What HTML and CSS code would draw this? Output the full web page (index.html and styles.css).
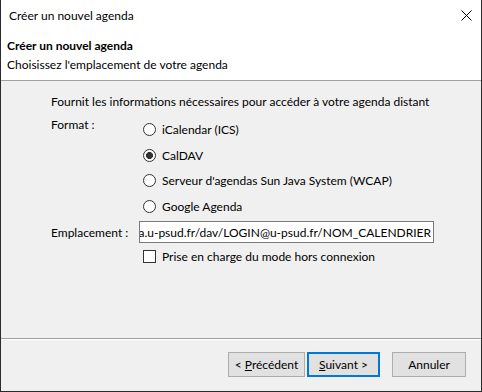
FILE: index.html
```html
<!DOCTYPE html>
<html lang="fr">
<head>
    <meta charset="UTF-8">
    <title>Créer un nouvel agenda</title>
    <link rel="stylesheet" href="styles.css">
</head>
<body>
<div class="window">
    <div class="titlebar">
        <span class="title">Créer un nouvel agenda</span>
        <svg class="close" width="11" height="11" viewBox="0 0 11 11">
            <path d="M0.5 0.5L10.5 10.5M10.5 0.5L0.5 10.5" stroke="#000" stroke-width="1" fill="none"/>
        </svg>
    </div>
    <div class="header">
        <div class="header-title">Créer un nouvel agenda</div>
        <div class="header-desc">Choisissez l'emplacement de votre agenda</div>
    </div>
    <div class="content">
        <p class="intro">Fournit les informations nécessaires pour accéder à votre agenda distant</p>
        <div class="form">
            <div class="form-label format-label">Format :</div>
            <div class="radio-group">
                <label class="radio"><span class="radio-mark"></span>iCalendar (ICS)</label>
                <label class="radio"><span class="radio-mark checked"></span>CalDAV</label>
                <label class="radio"><span class="radio-mark"></span>Serveur d'agendas Sun Java System (WCAP)</label>
                <label class="radio"><span class="radio-mark"></span>Google Agenda</label>
            </div>
            <div class="form-label">Emplacement :</div>
            <div class="field"><span>a.u-psud.fr/dav/LOGIN@u-psud.fr/NOM_CALENDRIER</span></div>
            <div></div>
            <label class="check"><span class="check-mark"></span>Prise en charge du mode hors connexion</label>
        </div>
    </div>
    <div class="footer">
        <button class="button prev">&lt; <u>P</u>récédent</button>
        <button class="button next"><u>S</u>uivant &gt;</button>
        <button class="button cancel">Annuler</button>
    </div>
</div>
</body>
</html>
```

FILE: styles.css
```css
body, html {
    margin: 0;
    padding: 0;
    font-family: Lato, 'Noto Sans', sans-serif;
    font-size: 12px;
    line-height: 19px;
    color: #000000;
    background-color: #f0f0f0;
}
.window {
    width: 482px;
    height: 392px;
    box-sizing: border-box;
    border: 1px solid #2b2b2b;
    border-top: none;
    display: flex;
    flex-direction: column;
    background-color: #f0f0f0;
}
.titlebar {
    height: 30px;
    background-color: #ffffff;
    display: flex;
    align-items: center;
    justify-content: space-between;
    padding: 0 9px 0 8px;
}
.close {
    display: block;
}
.header {
    background-color: #ffffff;
    padding: 6px 7px 6px 6px;
    border-bottom: 1px solid #a0a0a0;
}
.header-title {
    font-weight: bold;
}
.content {
    flex: 1;
    padding: 11px 47px 0 50px;
}
.intro {
    margin: 0 0 4px 0;
    white-space: nowrap;
}
.form {
    display: grid;
    grid-template-columns: 88px 1fr;
    row-gap: 2px;
}
.form-label {
    align-self: center;
    white-space: nowrap;
}
.format-label {
    align-self: start;
}
.radio-group {
    padding: 2px 0 0 4px;
}
.radio, .check {
    display: flex;
    align-items: center;
    height: 25.5px;
}
.radio-mark, .check-mark {
    width: 13px;
    height: 13px;
    box-sizing: border-box;
    border: 1px solid #333333;
    background-color: #ffffff;
    margin-right: 6px;
    flex-shrink: 0;
}
.radio-mark {
    border-radius: 50%;
}
.radio-mark.checked {
    background: radial-gradient(circle, #333333 3.2px, #ffffff 3.8px);
}
.field {
    height: 22px;
    box-sizing: border-box;
    border: 1px solid #7a7a7a;
    background-color: #ffffff;
    display: flex;
    justify-content: flex-end;
    align-items: center;
    overflow: hidden;
    white-space: nowrap;
    padding-right: 2px;
}
.check {
    margin-top: -1px;
    padding-left: 4px;
    height: 25px;
}
.footer {
    height: 53px;
    box-sizing: border-box;
    border-top: 1px solid #a0a0a0;
    box-shadow: inset 0 1px 0 #ffffff;
    padding: 13px 15px 0 0;
    display: flex;
    justify-content: flex-end;
    align-items: flex-start;
}
.button {
    height: 25px;
    box-sizing: border-box;
    border: 1px solid #adadad;
    background-color: #e1e1e1;
    font-family: inherit;
    font-size: 12px;
    color: #000000;
    padding: 0;
}
.prev {
    width: 77px;
    margin-right: 2px;
}
.next {
    width: 73px;
    border: 2px solid #0078d7;
    margin-right: 12px;
}
.cancel {
    width: 74px;
}
```
